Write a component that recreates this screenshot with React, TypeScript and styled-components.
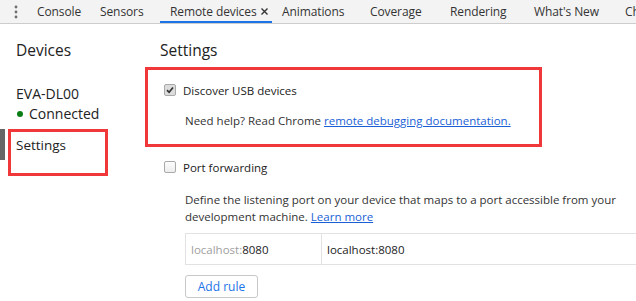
import React from 'react';
import styled, { createGlobalStyle, css } from 'styled-components';

const GlobalStyle = createGlobalStyle`
    body {
        margin: 0;
        background: #fff;
        font-family: 'Open Sans', 'Noto Sans', sans-serif;
        font-size: 11.5px;
        color: #333;
    }
`;

const Page = styled.div`
    width: 636px;
    height: 301px;
    overflow: hidden;
    display: flex;
    flex-direction: column;
`;

const TabBar = styled.div`
    display: flex;
    align-items: stretch;
    height: 23px;
    background: #f3f3f3;
    border-bottom: 1px solid #cdcdcd;
    white-space: nowrap;
    overflow: hidden;
`;

const MenuButton = styled.div`
    flex: none;
    width: 27px;
    display: flex;
    align-items: center;
    justify-content: center;
    padding-left: 4px;
    box-sizing: border-box;
`;

const Tab = styled.div<{ selected?: boolean; w: string }>`
    flex: none;
    display: flex;
    align-items: center;
    gap: 4px;
    width: ${(props) => props.w};
    padding-left: 10px;
    color: #333;
    font-size: 12px;
    letter-spacing: -0.1px;
    box-sizing: border-box;
    ${(props) =>
        props.selected &&
        css`
            box-shadow: inset 0 -2px 0 #1a73e8;
        `}
`;

const Body = styled.div`
    display: flex;
    flex: 1;
`;

const Sidebar = styled.div`
    width: 145px;
    flex: none;
    padding-top: 14px;
    display: flex;
    flex-direction: column;
`;

const Heading = styled.div<{ indent?: string }>`
    font-size: 15.5px;
    line-height: 24px;
    color: #222;
    padding-left: ${(props) => props.indent || '0'};
`;

const DeviceItem = styled.div`
    margin-top: 22px;
    padding-left: 16px;
    display: flex;
    flex-direction: column;
`;

const DeviceName = styled.div`
    font-size: 14px;
    line-height: 20px;
    color: #222;
`;

const Status = styled.div`
    display: flex;
    align-items: center;
    gap: 6px;
    font-size: 14px;
    line-height: 20px;
    color: #222;
`;

const Dot = styled.span`
    width: 6px;
    height: 6px;
    border-radius: 50%;
    background: #0a7d15;
    margin-left: 1px;
`;

const SideItem = styled.div<{ selected?: boolean }>`
    position: relative;
    margin-top: 5px;
    height: 31px;
    display: flex;
    align-items: center;
    padding-left: 16px;
    font-size: 13.5px;
    color: #222;
    ${(props) =>
        props.selected &&
        css`
            box-shadow: inset 5px 0 0 #666;
        `}
`;

const Annotation = styled.div<{ left: string; top: string; w: string; h: string }>`
    position: absolute;
    left: ${(props) => props.left};
    top: ${(props) => props.top};
    width: ${(props) => props.w};
    height: ${(props) => props.h};
    border: 3px solid #f0383a;
    box-sizing: border-box;
    pointer-events: none;
`;

const Main = styled.div`
    flex: 1;
    padding-top: 14px;
    display: flex;
    flex-direction: column;
    min-width: 0;
`;

const Highlight = styled.div`
    position: relative;
    margin-top: 5px;
    width: 397px;
    height: 80px;
    box-sizing: border-box;
    padding: 13px 0 0 15px;
`;

const Section = styled.div<{ mt?: string }>`
    padding-left: 15px;
    margin-top: ${(props) => props.mt || '0'};
`;

const CheckRow = styled.label`
    display: flex;
    align-items: center;
    height: 20px;
    padding-left: 4px;
    gap: 7px;
    font-size: 11.5px;
    color: #222;
`;

const Box = styled.span<{ checked?: boolean }>`
    width: 12px;
    height: 12px;
    box-sizing: border-box;
    border: 1px solid #a9a9a9;
    border-radius: 2px;
    background: ${(props) =>
        props.checked ? '#dcdcdc' : 'linear-gradient(#fcfcfc, #ededed)'};
    display: flex;
    align-items: center;
    justify-content: center;
`;

const Hint = styled.div<{ mt: string }>`
    margin-top: ${(props) => props.mt};
    padding-left: 25px;
    font-size: 11.5px;
    line-height: 17px;
    color: #333;
`;

const Link = styled.a`
    color: #1a5fd6;
    text-decoration: underline;
`;

const RuleTable = styled.div`
    margin: 8px 0 0 25px;
    display: flex;
    height: 32px;
    border: 1px solid #e2e2e2;
    border-right: none;
    box-sizing: border-box;
`;

const Cell = styled.div<{ w?: string }>`
    display: flex;
    align-items: center;
    padding-left: 5px;
    width: ${(props) => props.w || 'auto'};
    flex: ${(props) => (props.w ? 'none' : '1')};
    border-right: 1px solid #e2e2e2;
    color: #222;
    font-size: 11.5px;
    &:last-child {
        border-right: none;
    }
`;

const Faint = styled.span`
    color: #a0a0a0;
`;

const Button = styled.button`
    margin: 10px 0 0 25px;
    width: 73px;
    height: 23px;
    border: 1px solid #c8c8c8;
    border-radius: 3px;
    background: #fff;
    color: #1a73e8;
    font-family: inherit;
    font-size: 12px;
    padding: 0;
`;

const tabs: { label: string; w: string; selected?: boolean; close?: boolean }[] = [
    { label: 'Console', w: '63px' },
    { label: 'Sensors', w: '70px' },
    { label: 'Remote devices', w: '112px', selected: true, close: true },
    { label: 'Animations', w: '88px' },
    { label: 'Coverage', w: '80px' },
    { label: 'Rendering', w: '84px' },
    { label: "What's New", w: '91px' },
    { label: 'Chrome', w: '80px' },
];

const Check = () => (
    <svg width="8" height="8" viewBox="0 0 8 8">
        <path d="M1 4.2 L3.1 6.3 L7 1.5" fill="none" stroke="#333" strokeWidth="1.7" />
    </svg>
);

export default function App() {
    return (
        <Page>
            <GlobalStyle />
            <TabBar>
                <MenuButton>
                    <svg width="4" height="14" viewBox="0 0 4 14">
                        <circle cx="2" cy="2" r="1.4" fill="#6e6e6e" />
                        <circle cx="2" cy="7" r="1.4" fill="#6e6e6e" />
                        <circle cx="2" cy="12" r="1.4" fill="#6e6e6e" />
                    </svg>
                </MenuButton>
                {tabs.map((t) => (
                    <Tab key={t.label} w={t.w} selected={t.selected}>
                        {t.label}
                        {t.close && (
                            <svg width="7" height="7" viewBox="0 0 7 7">
                                <path d="M0.5 0.5 L6.5 6.5 M6.5 0.5 L0.5 6.5" stroke="#333" strokeWidth="1.4" />
                            </svg>
                        )}
                    </Tab>
                ))}
            </TabBar>
            <Body>
                <Sidebar>
                    <Heading indent="16px">Devices</Heading>
                    <DeviceItem>
                        <DeviceName>EVA-DL00</DeviceName>
                        <Status>
                            <Dot />
                            Connected
                        </Status>
                    </DeviceItem>
                    <SideItem selected>
                        Settings
                        <Annotation left="8px" top="0" w="100px" h="47px" />
                    </SideItem>
                </Sidebar>
                <Main>
                    <Heading indent="15px">Settings</Heading>
                    <Highlight>
                        <CheckRow>
                            <Box checked>
                                <Check />
                            </Box>
                            Discover USB devices
                        </CheckRow>
                        <Hint mt="12px">
                            Need help? Read Chrome <Link href="#">remote debugging documentation.</Link>
                        </Hint>
                        <Annotation left="0" top="0" w="100%" h="100%" />
                    </Highlight>
                    <Section mt="10px">
                        <CheckRow>
                            <Box />
                            Port forwarding
                        </CheckRow>
                        <Hint mt="14px">
                            Define the listening port on your device that maps to a port accessible from your
                            development machine. <Link href="#">Learn more</Link>
                        </Hint>
                        <RuleTable>
                            <Cell w="130px">
                                <Faint>localhost:</Faint>8080
                            </Cell>
                            <Cell>localhost:8080</Cell>
                        </RuleTable>
                        <Button>Add rule</Button>
                    </Section>
                </Main>
            </Body>
        </Page>
    );
}
